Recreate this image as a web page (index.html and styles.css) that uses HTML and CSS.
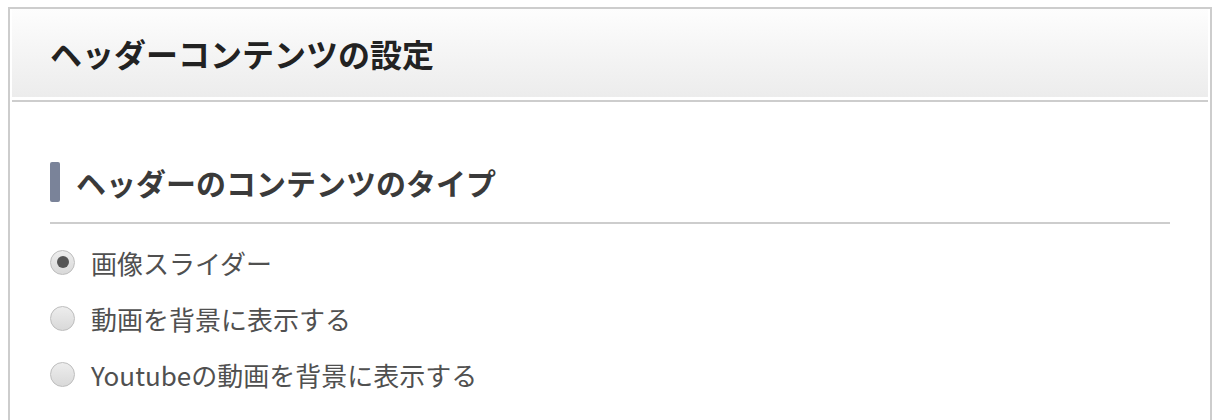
FILE: index.html
```html
<!DOCTYPE html>
<html lang="ja">
<head>
  <meta charset="UTF-8">
  <title>ヘッダーコンテンツの設定</title>
  <link rel="stylesheet" href="styles.css">
</head>
<body>
  <div class="panel">
    <div class="panel-header">
      <h2 class="panel-title">ヘッダーコンテンツの設定</h2>
    </div>
    <div class="panel-body">
      <h3 class="section-title">ヘッダーのコンテンツのタイプ</h3>
      <ul class="radio-list">
        <li class="radio-item">
          <span class="radio checked"></span>
          <span class="radio-label">画像スライダー</span>
        </li>
        <li class="radio-item">
          <span class="radio"></span>
          <span class="radio-label">動画を背景に表示する</span>
        </li>
        <li class="radio-item">
          <span class="radio"></span>
          <span class="radio-label">Youtubeの動画を背景に表示する</span>
        </li>
      </ul>
    </div>
  </div>
</body>
</html>
```

FILE: styles.css
```css
* {
  box-sizing: border-box;
  margin: 0;
  padding: 0;
}

body {
  margin: 7px 8px 0;
  font-family: "Noto Sans CJK JP", "Noto Sans", sans-serif;
  background-color: #fff;
}

.panel {
  border: 2px solid #cdcdcd;
  border-bottom: none;
  background-color: #fff;
  height: 420px;
}

.panel-header {
  margin: 0 2px;
  padding-bottom: 3px;
  border-bottom: 2px solid #cdcdcd;
  background-color: #fff;
}

.panel-title {
  height: 88px;
  display: flex;
  align-items: center;
  padding-left: 38px;
  font-size: 32px;
  font-weight: bold;
  color: #222;
  background: linear-gradient(to bottom, #fdfdfd 0%, #ececec 100%);
}

.panel-body {
  padding: 60px 40px 0;
}

.section-title {
  display: flex;
  align-items: center;
  height: 40px;
  font-size: 30px;
  font-weight: bold;
  color: #3a3a3a;
}

.section-title::before {
  content: "";
  flex: none;
  width: 10px;
  height: 40px;
  margin-right: 16px;
  border-radius: 2px;
  background-color: #7a8399;
}

.radio-list {
  list-style: none;
  margin-top: 20px;
  border-top: 2px solid #cdcdcd;
  padding-top: 10px;
}

.radio-item {
  display: flex;
  align-items: center;
  height: 56px;
}

.radio {
  flex: none;
  width: 25px;
  height: 25px;
  border-radius: 50%;
  border: 1px solid #bdbdbd;
  background: linear-gradient(to bottom, #ededed 0%, #d9d9d9 100%);
  margin-right: 16px;
  display: flex;
  align-items: center;
  justify-content: center;
}

.radio.checked::after {
  content: "";
  width: 12px;
  height: 12px;
  border-radius: 50%;
  background-color: #555;
}

.radio-label {
  font-size: 26px;
  color: #505050;
}
```
